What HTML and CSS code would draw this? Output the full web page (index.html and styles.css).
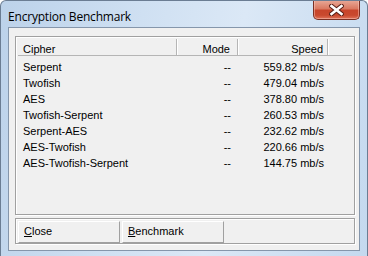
FILE: index.html
```html
<!DOCTYPE html>
<html lang="en">
<head>
    <meta charset="UTF-8">
    <title>Encryption Benchmark</title>
    <link rel="stylesheet" href="styles.css">
</head>
<body>
    <div class="window">
        <div class="titlebar">
            <span class="title">Encryption Benchmark</span>
            <button class="close-btn" aria-label="Close">
                <svg width="15" height="12" viewBox="0 0 15 12">
                    <path d="M2.5 2 L12.5 10 M12.5 2 L2.5 10" stroke="#5a1f16" stroke-width="4.6" stroke-linecap="square" fill="none"/>
                    <path d="M2.5 2 L12.5 10 M12.5 2 L2.5 10" stroke="#ffffff" stroke-width="2.6" stroke-linecap="square" fill="none"/>
                </svg>
            </button>
        </div>

        <div class="client">
            <div class="listbox">
                <div class="list-row list-header">
                    <div class="cell cipher">Cipher</div>
                    <div class="cell mode">Mode</div>
                    <div class="cell speed">Speed</div>
                    <div class="cell filler"></div>
                </div>
                <div class="list-body">
                    <div class="list-row">
                        <div class="cell cipher">Serpent</div>
                        <div class="cell mode">--</div>
                        <div class="cell speed">559.82 mb/s</div>
                    </div>
                    <div class="list-row">
                        <div class="cell cipher">Twofish</div>
                        <div class="cell mode">--</div>
                        <div class="cell speed">479.04 mb/s</div>
                    </div>
                    <div class="list-row">
                        <div class="cell cipher">AES</div>
                        <div class="cell mode">--</div>
                        <div class="cell speed">378.80 mb/s</div>
                    </div>
                    <div class="list-row">
                        <div class="cell cipher">Twofish-Serpent</div>
                        <div class="cell mode">--</div>
                        <div class="cell speed">260.53 mb/s</div>
                    </div>
                    <div class="list-row">
                        <div class="cell cipher">Serpent-AES</div>
                        <div class="cell mode">--</div>
                        <div class="cell speed">232.62 mb/s</div>
                    </div>
                    <div class="list-row">
                        <div class="cell cipher">AES-Twofish</div>
                        <div class="cell mode">--</div>
                        <div class="cell speed">220.66 mb/s</div>
                    </div>
                    <div class="list-row">
                        <div class="cell cipher">AES-Twofish-Serpent</div>
                        <div class="cell mode">--</div>
                        <div class="cell speed">144.75 mb/s</div>
                    </div>
                </div>
            </div>

            <div class="button-bar">
                <button class="btn"><u>C</u>lose</button>
                <button class="btn"><u>B</u>enchmark</button>
            </div>
        </div>
    </div>
</body>
</html>
```

FILE: styles.css
```css
body {
    margin: 0;
    background-color: #ffffff;
}
.window {
    width: 368px;
    height: 256px;
    box-sizing: border-box;
    border: 1px solid #6b7d93;
    border-bottom: none;
    border-radius: 6px 6px 0 0;
    background: linear-gradient(100deg, #bcd2ea 0%, #cfe0f2 35%, #dbe8f6 60%, #c4d9ef 100%);
    display: flex;
    flex-direction: column;
    overflow: hidden;
}
.titlebar {
    height: 26px;
    display: flex;
    justify-content: space-between;
    align-items: flex-start;
}
.title {
    font-family: 'Open Sans', 'Noto Sans', sans-serif;
    font-size: 12px;
    color: #000;
    margin: 7px 0 0 7px;
    letter-spacing: -0.2px;
}
.close-btn {
    width: 47px;
    height: 20px;
    margin: -1px 7px 0 0;
    padding: 0;
    border: 1px solid #7a3024;
    border-top: none;
    border-radius: 0 0 5px 5px;
    background: linear-gradient(180deg, #e9ab9a 0%, #da7a62 45%, #c8452b 55%, #c9492e 80%, #e0735a 100%);
    box-shadow: inset 0 0 0 1px rgba(255, 210, 200, 0.45);
    display: flex;
    align-items: center;
    justify-content: center;
}
.client {
    flex: 1;
    margin: 0 7px 5px 7px;
    border: 1px solid #8596ab;
    background-color: #f0f0f0;
    padding: 8px 4px 6px 6px;
    display: flex;
    flex-direction: column;
    gap: 3px;
    font-family: 'Liberation Sans', Arial, sans-serif;
    font-size: 11px;
    color: #000;
}
.listbox {
    flex: 1;
    border: 1px solid #a0a0a0;
    box-shadow: 1px 1px 0 #ffffff, inset 1px 1px 0 #ffffff;
    padding: 2px 2px 0 2px;
}
.list-row {
    display: grid;
    grid-template-columns: 159px 61px 90px 22px;
    height: 16px;
    align-items: center;
}
.list-header {
    height: 17px;
    border-bottom: 1px solid #b5b5b5;
    box-sizing: border-box;
}
.list-header .cell {
    height: 100%;
    display: flex;
    align-items: center;
    box-sizing: border-box;
    padding-top: 3px;
    border-right: 1px solid #b5b5b5;
    box-shadow: 1px 0 0 #ffffff;
}
.list-header .mode,
.list-header .speed {
    justify-content: flex-end;
}
.list-header .filler {
    border-right: none;
    box-shadow: none;
}
.list-body {
    padding-top: 3px;
}
.list-body .list-row:nth-child(n+5) {
    height: 16.2px;
}
.cell {
    white-space: nowrap;
}
.cipher {
    padding-left: 5px;
}
.mode {
    text-align: right;
    padding-right: 7px;
}
.speed {
    text-align: right;
    padding-right: 4px;
}
.button-bar {
    height: 26px;
    box-sizing: border-box;
    border: 1px solid #a0a0a0;
    box-shadow: 1px 1px 0 #ffffff, inset 1px 1px 0 #ffffff;
    padding: 2px 2px 1px 2px;
    display: flex;
    gap: 2px;
}
.btn {
    width: 102px;
    height: 22px;
    padding: 0 0 3px 5px;
    text-align: left;
    background-color: #f0f0f0;
    border: 1px solid #a0a0a0;
    border-top-color: #ffffff;
    border-left-color: #ffffff;
    font-family: 'Liberation Sans', Arial, sans-serif;
    font-size: 11px;
    color: #000;
}
```
